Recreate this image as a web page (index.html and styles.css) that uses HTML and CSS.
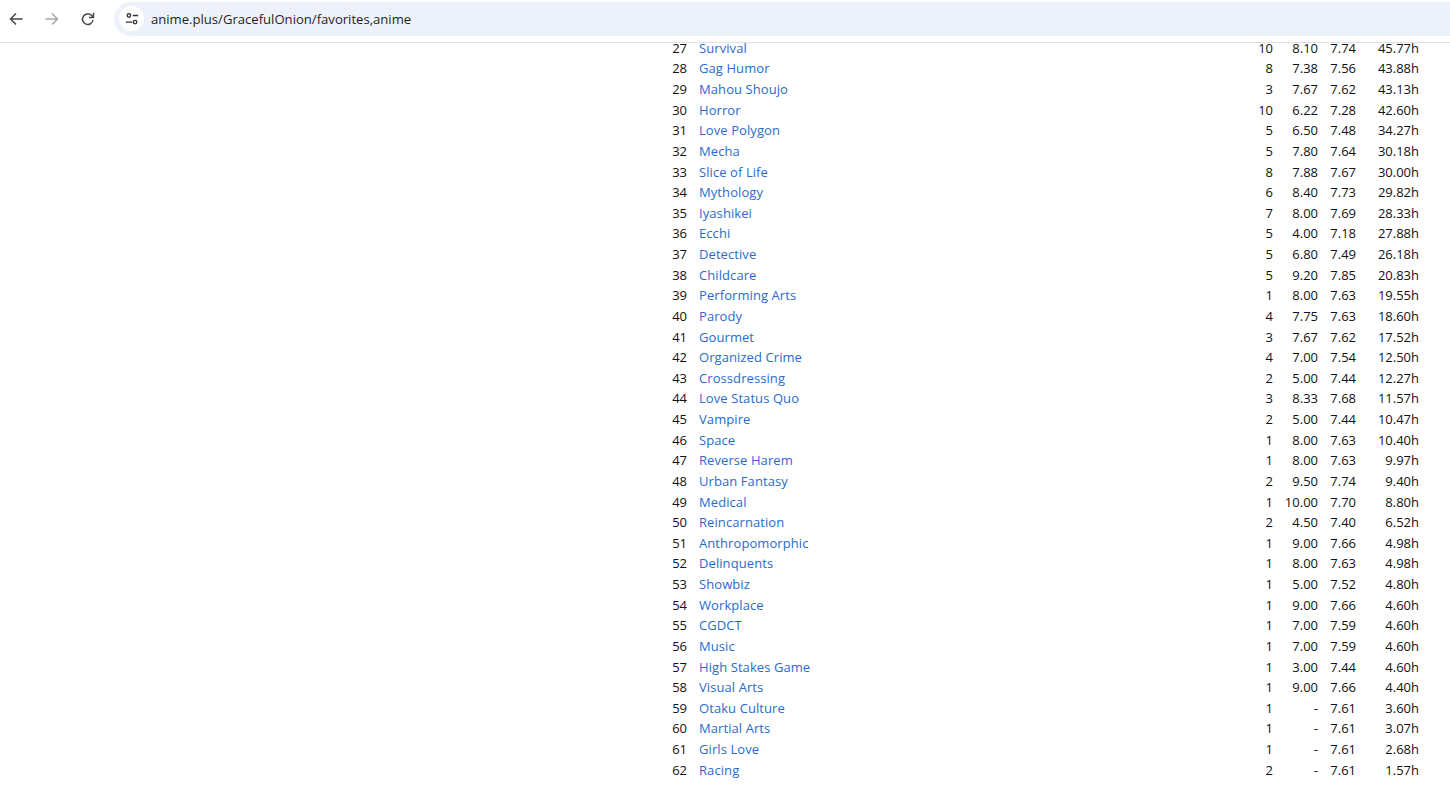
FILE: index.html
```html
<!DOCTYPE html>
<html lang="en">
<head>
<meta charset="utf-8">
<title>GracefulOnion favorites</title>
<link rel="stylesheet" href="styles.css">
</head>
<body>
<header class="toolbar">
  <svg class="nav-icon" viewBox="0 0 16 16"><path d="M14.5 8H2.5M8 2.5L2.5 8L8 13.5" fill="none" stroke="#474747" stroke-width="1.5"/></svg>
  <svg class="nav-icon" viewBox="0 0 16 16"><path d="M1.5 8H13.5M8 2.5L13.5 8L8 13.5" fill="none" stroke="#a6a6a6" stroke-width="1.5"/></svg>
  <svg class="nav-icon" viewBox="0 0 16 16"><path d="M13 9a5.3 5.3 0 1 1-1.5-4.6L13.2 6" fill="none" stroke="#474747" stroke-width="1.5"/><path d="M13.5 1.8V6.5H8.8" fill="none" stroke="#474747" stroke-width="1.5"/></svg>
  <div class="omnibox">
    <span class="chip"><svg viewBox="0 0 16 16" class="chip-icon"><circle cx="4.5" cy="4" r="2" fill="none" stroke="#333" stroke-width="1.5"/><path d="M9 4H15M1 11.5H8.5" stroke="#333" stroke-width="1.5" fill="none"/><circle cx="11.5" cy="11.5" r="2" fill="none" stroke="#333" stroke-width="1.5"/></svg></span>
    <span class="url">anime.plus/GracefulOnion/favorites,anime</span>
  </div>
</header>
<main class="page">
  <table class="stats">
    <colgroup><col class="c-rank"><col class="c-title"><col class="c-count"><col class="c-score"><col class="c-mean"><col class="c-hours"></colgroup>
    <tbody>
      <tr><td>27</td><td class="name"><a href="#">Survival</a></td><td>10</td><td>8.10</td><td>7.74</td><td>45.77h</td></tr>
      <tr><td>28</td><td class="name"><a href="#">Gag Humor</a></td><td>8</td><td>7.38</td><td>7.56</td><td>43.88h</td></tr>
      <tr><td>29</td><td class="name"><a href="#">Mahou Shoujo</a></td><td>3</td><td>7.67</td><td>7.62</td><td>43.13h</td></tr>
      <tr><td>30</td><td class="name"><a href="#">Horror</a></td><td>10</td><td>6.22</td><td>7.28</td><td>42.60h</td></tr>
      <tr><td>31</td><td class="name"><a href="#">Love Polygon</a></td><td>5</td><td>6.50</td><td>7.48</td><td>34.27h</td></tr>
      <tr><td>32</td><td class="name"><a href="#">Mecha</a></td><td>5</td><td>7.80</td><td>7.64</td><td>30.18h</td></tr>
      <tr><td>33</td><td class="name"><a href="#">Slice of Life</a></td><td>8</td><td>7.88</td><td>7.67</td><td>30.00h</td></tr>
      <tr><td>34</td><td class="name"><a href="#">Mythology</a></td><td>6</td><td>8.40</td><td>7.73</td><td>29.82h</td></tr>
      <tr><td>35</td><td class="name"><a href="#">Iyashikei</a></td><td>7</td><td>8.00</td><td>7.69</td><td>28.33h</td></tr>
      <tr><td>36</td><td class="name"><a href="#">Ecchi</a></td><td>5</td><td>4.00</td><td>7.18</td><td>27.88h</td></tr>
      <tr><td>37</td><td class="name"><a href="#">Detective</a></td><td>5</td><td>6.80</td><td>7.49</td><td>26.18h</td></tr>
      <tr><td>38</td><td class="name"><a href="#">Childcare</a></td><td>5</td><td>9.20</td><td>7.85</td><td>20.83h</td></tr>
      <tr><td>39</td><td class="name"><a href="#">Performing Arts</a></td><td>1</td><td>8.00</td><td>7.63</td><td>19.55h</td></tr>
      <tr><td>40</td><td class="name"><a href="#">Parody</a></td><td>4</td><td>7.75</td><td>7.63</td><td>18.60h</td></tr>
      <tr><td>41</td><td class="name"><a href="#">Gourmet</a></td><td>3</td><td>7.67</td><td>7.62</td><td>17.52h</td></tr>
      <tr><td>42</td><td class="name"><a href="#">Organized Crime</a></td><td>4</td><td>7.00</td><td>7.54</td><td>12.50h</td></tr>
      <tr><td>43</td><td class="name"><a href="#">Crossdressing</a></td><td>2</td><td>5.00</td><td>7.44</td><td>12.27h</td></tr>
      <tr><td>44</td><td class="name"><a href="#">Love Status Quo</a></td><td>3</td><td>8.33</td><td>7.68</td><td>11.57h</td></tr>
      <tr><td>45</td><td class="name"><a href="#">Vampire</a></td><td>2</td><td>5.00</td><td>7.44</td><td>10.47h</td></tr>
      <tr><td>46</td><td class="name"><a href="#">Space</a></td><td>1</td><td>8.00</td><td>7.63</td><td>10.40h</td></tr>
      <tr><td>47</td><td class="name"><a href="#">Reverse Harem</a></td><td>1</td><td>8.00</td><td>7.63</td><td>9.97h</td></tr>
      <tr><td>48</td><td class="name"><a href="#">Urban Fantasy</a></td><td>2</td><td>9.50</td><td>7.74</td><td>9.40h</td></tr>
      <tr><td>49</td><td class="name"><a href="#">Medical</a></td><td>1</td><td>10.00</td><td>7.70</td><td>8.80h</td></tr>
      <tr><td>50</td><td class="name"><a href="#">Reincarnation</a></td><td>2</td><td>4.50</td><td>7.40</td><td>6.52h</td></tr>
      <tr><td>51</td><td class="name"><a href="#">Anthropomorphic</a></td><td>1</td><td>9.00</td><td>7.66</td><td>4.98h</td></tr>
      <tr><td>52</td><td class="name"><a href="#">Delinquents</a></td><td>1</td><td>8.00</td><td>7.63</td><td>4.98h</td></tr>
      <tr><td>53</td><td class="name"><a href="#">Showbiz</a></td><td>1</td><td>5.00</td><td>7.52</td><td>4.80h</td></tr>
      <tr><td>54</td><td class="name"><a href="#">Workplace</a></td><td>1</td><td>9.00</td><td>7.66</td><td>4.60h</td></tr>
      <tr><td>55</td><td class="name"><a href="#">CGDCT</a></td><td>1</td><td>7.00</td><td>7.59</td><td>4.60h</td></tr>
      <tr><td>56</td><td class="name"><a href="#">Music</a></td><td>1</td><td>7.00</td><td>7.59</td><td>4.60h</td></tr>
      <tr><td>57</td><td class="name"><a href="#">High Stakes Game</a></td><td>1</td><td>3.00</td><td>7.44</td><td>4.60h</td></tr>
      <tr><td>58</td><td class="name"><a href="#">Visual Arts</a></td><td>1</td><td>9.00</td><td>7.66</td><td>4.40h</td></tr>
      <tr><td>59</td><td class="name"><a href="#">Otaku Culture</a></td><td>1</td><td>-</td><td>7.61</td><td>3.60h</td></tr>
      <tr><td>60</td><td class="name"><a href="#">Martial Arts</a></td><td>1</td><td>-</td><td>7.61</td><td>3.07h</td></tr>
      <tr><td>61</td><td class="name"><a href="#">Girls Love</a></td><td>1</td><td>-</td><td>7.61</td><td>2.68h</td></tr>
      <tr><td>62</td><td class="name"><a href="#">Racing</a></td><td>2</td><td>-</td><td>7.61</td><td>1.57h</td></tr>
    </tbody>
  </table>
</main>
</body>
</html>
```
FILE: styles.css
```css
* { box-sizing: border-box; }
html, body { height: 100%; margin: 0; overflow: hidden; }
body {
  display: flex;
  flex-direction: column;
  background: #fff;
  font-family: "Open Sans", sans-serif;
  font-size: 13px;
  color: #111;
}
.toolbar {
  flex: none;
  height: 43px;
  display: flex;
  align-items: center;
  padding: 0 0 5px 8px;
  gap: 20px;
  border-bottom: 1px solid #dfe1e5;
  background: #fff;
  position: relative;
  z-index: 1;
}
.nav-icon { width: 16px; height: 16px; flex: none; }
.omnibox {
  flex: 1;
  height: 34px;
  margin-left: -2px;
  display: flex;
  align-items: center;
  background: #edf2fa;
  border-radius: 17px 0 0 17px;
  padding-left: 5px;
}
.chip {
  width: 25px;
  height: 25px;
  border-radius: 50%;
  background: #fff;
  display: flex;
  align-items: center;
  justify-content: center;
}
.chip-icon { width: 14px; height: 14px; }
.url { margin-left: 7px; font-family: "Open Sans", sans-serif; font-size: 13.1px; color: #1f1f1f; }
.page {
  flex: 1;
  min-height: 0;
  overflow: hidden;
  display: flex;
  flex-direction: column;
  justify-content: flex-end;
  padding: 0 0 17.05px 660px;
}
.stats {
  flex: none;
  width: 759px;
  table-layout: fixed;
  border-collapse: collapse;
}
.stats td { padding: 0; height: 20.625px; line-height: 20px; text-align: right; white-space: nowrap; }
.stats td.name { text-align: left; padding-left: 12px; }
.stats a { color: #2a6bcb; text-decoration: none; letter-spacing: 0.08px; }
.c-rank { width: 27px; }
.c-count { width: 33px; }
.c-score { width: 45px; }
.c-mean { width: 38px; }
.c-hours { width: 63px; }
```
